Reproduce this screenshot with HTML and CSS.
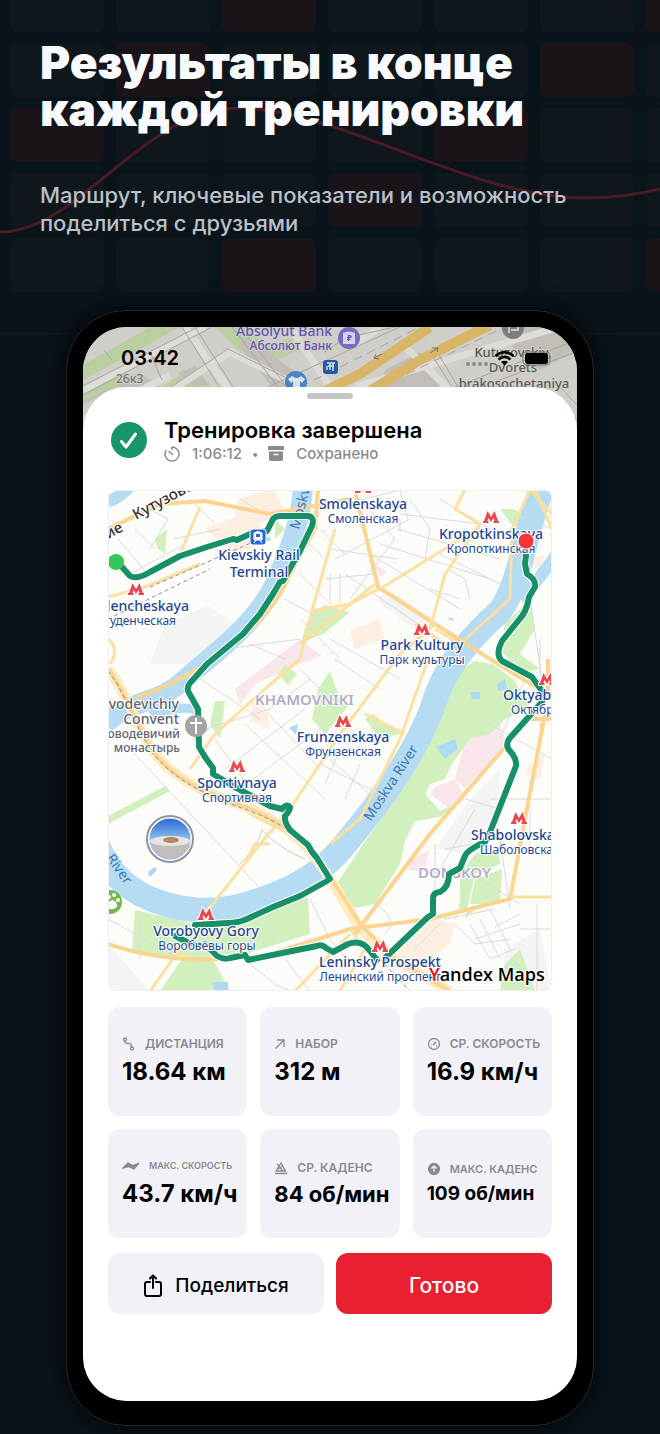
FILE: index.html
```html
<!DOCTYPE html>
<html lang="ru">
<head>
  <meta charset="UTF-8" />
  <meta name="viewport" content="width=device-width, initial-scale=1" />
  <title>Результаты тренировки</title>
  <link rel="stylesheet" href="styles.css">
</head>
<body>
  <svg class="backdrop" viewBox="0 0 660 340" preserveAspectRatio="xMidYMin slice" aria-hidden="true">
    <defs>
      <pattern id="tiles" x="10" y="-22" width="106" height="65" patternUnits="userSpaceOnUse">
        <rect width="94" height="54" rx="8" fill="#0f171c" />
      </pattern>
    </defs>
    <rect y="-22" width="660" height="315" fill="url(#tiles)" />
    <g fill="#1a141a">
      <rect x="222" y="-22" width="94" height="54" rx="8" />
      <rect x="646" y="-22" width="94" height="54" rx="8" />
      <rect x="116" y="43" width="94" height="54" rx="8" />
      <rect x="540" y="43" width="94" height="54" rx="8" />
      <rect x="10" y="108" width="94" height="54" rx="8" />
      <rect x="434" y="108" width="94" height="54" rx="8" />
      <rect x="328" y="173" width="94" height="54" rx="8" />
      <rect x="222" y="238" width="94" height="54" rx="8" />
      <rect x="646" y="238" width="94" height="54" rx="8" />
    </g>
    <path d="M0 232C80 232 140 109 240 108C340 109 470 198 585 198C615 198 640 194 660 189" fill="none" stroke="#4a1a25" stroke-width="3" />
    <path d="M0 334H660" stroke="#111c24" />
  </svg>

  <header class="hero">
    <h1>Результаты в конце каждой тренировки</h1>
    <p>Маршрут, ключевые показатели и возможность поделиться с друзьями</p>
  </header>

  <main class="phone">
    <div class="screen">
      <svg class="top-map" viewBox="83 327 494 110" preserveAspectRatio="xMidYMin slice" aria-hidden="true">
        <rect x="83" y="327" width="494" height="110" fill="#cfcec9" />
        <g fill="#b9cf9f">
          <path d="M83 365L150 327H180L83 380ZM83 395L120 372L128 380L83 405ZM215 327L250 327L262 345L240 352ZM160 388L195 365L212 388ZM262 348L290 338L300 350L272 362Z" />
        </g>
        <g fill="#c2bdb7">
          <path d="M245 337L265 350L300 375L290 387H272L238 345ZM83 405L140 372L160 387H110L83 402ZM178 373L195 366L208 385L195 387ZM385 370L420 352L440 387H380ZM505 327H577V350L540 370L515 352Z" />
        </g>
        <g fill="none" stroke="#dddcd8" stroke-width="7">
          <path d="M83 390L205 327M100 437L230 352L300 387M185 327L262 437M290 327L330 387M380 327L355 345M355 387L560 327M400 342L460 400M83 420L170 375" />
        </g>
        <g fill="none" stroke="#a5a5a2" stroke-width="1">
          <path d="M83 386L198 327M83 395L212 327M96 437L228 349L305 387M182 327L250 437M195 327L265 437M232 327L278 387M240 327L287 387M268 387L400 327M325 352L345 338L395 327M455 387L577 340M480 387L577 352M430 352L452 387M436 350L458 387M545 387L577 420M560 387L577 405M83 343L110 327M104 350L112 360M150 352L162 380" />
          <path d="M300 387L420 327M380 387L505 327" stroke-dasharray="9 6" />
        </g>
        <path d="M315 396L360 374L430 327M365 394L420 360L490 325" fill="none" stroke="#d9b566" stroke-width="10" />
        <path d="M382 354L374 358M374 358L376 354M374 358L379 359M430 353L438 348M438 348L432 348M438 348L437 352" fill="none" stroke="#77756c" />
        <circle cx="349" cy="338" r="11" fill="#7a68c2" />
        <path d="M343 333Q349 330 355 333V344H343Z" fill="#d7d2e8" />
        <text class="rub" x="347" y="341">₽</text>
        <rect x="323" y="360" width="15" height="14" rx="3" fill="#2459a8" />
        <path d="M327 363H335M328 366H334M327 370V366M330 370V363M333 363V371" fill="none" stroke="#d5dce8" stroke-width="1.5" />
        <circle cx="296" cy="382" r="11" fill="#4685c6" />
        <path d="M292 376L288 379L291 383L293 381V388H300V381L302 383L305 379L301 376Q297 380 292 376Z" fill="#dce2e6" />
        <circle cx="513" cy="328" r="11" fill="#7f7d7b" />
        <path d="M509 333V325H518V330H511" fill="none" stroke="#c9c8c6" stroke-width="2" />
        <g class="top-labels">
          <g fill="#6553ad" text-anchor="end">
            <text x="332" y="336" font-size="14">Absolyut Bank</text>
            <text x="332" y="350" font-size="12">Абсолют Банк</text>
          </g>
          <g fill="#5a5957" text-anchor="middle" font-size="13">
            <text x="513" y="357">Kutuzovskiy,</text>
            <text x="513" y="372">Dvorets</text>
            <text x="514" y="388">brakosochetaniya</text>
          </g>
          <text x="116" y="383" font-size="12" fill="#777672">26к3</text>
        </g>
      </svg>

      <div class="status-bar">
        <span class="clock">03:42</span>
        <svg class="status-icons" width="88" height="20" viewBox="463 348 88 20" aria-hidden="true">
          <g fill="#8d8c88"><circle cx="468" cy="364" r="2" /><circle cx="474" cy="364" r="2" /><circle cx="480" cy="364" r="2" /><circle cx="486" cy="364" r="2" /></g>
          <g fill="none" stroke="#000" stroke-width="2.5">
            <path d="M495.500 356Q504.500 348.500 513.500 356M498.500 359.500Q504.500 354.500 510.500 359.500" />
          </g>
          <path d="M501 362Q504.500 359.500 508 362L504.500 365.500Z" />
          <rect x="523" y="352" width="27" height="13" rx="4" fill="none" stroke="#777" />
          <rect x="525" y="353" width="23" height="11" rx="3" />
        </svg>
      </div>

      <section class="sheet">
        <div class="handle"></div>
        <div class="summary">
          <svg class="done" width="38" height="38" viewBox="0 0 38 38" aria-hidden="true">
            <circle cx="19" cy="19" r="18" fill="#17966c" />
            <path d="M11.500 20.500L16 26L25.500 13" fill="none" stroke="#fff" stroke-width="3" stroke-linecap="round" stroke-linejoin="round" />
          </svg>
          <div>
            <h2>Тренировка завершена</h2>
            <p class="meta">
              <svg width="16" height="16" viewBox="0 0 16 16" fill="none" stroke="currentColor" stroke-width="1.500" stroke-linecap="round" aria-hidden="true">
                <path d="M8 1A7 7 0 1 1 2 4.500M8 1V3.500M5 5.500L8.500 8.500" />
              </svg>
              <span class="time">1:06:12</span>
              <span class="dot">•</span>
              <svg width="16" height="16" viewBox="0 0 16 16" fill="currentColor" aria-hidden="true">
                <rect width="16" height="4" rx="1" />
                <path d="M1 5.500H15V13Q15 15 13 15H3Q1 15 1 13Z" />
                <path d="M5.500 8.500H10.500" stroke="#fff" stroke-width="1.500" />
              </svg>
              <span class="saved">Сохранено</span>
            </p>
          </div>
        </div>

        <svg class="route-map" viewBox="108 491 444 501" role="img" aria-label="Маршрут тренировки">
          <defs>
            <g id="metro">
              <path d="M-8 6V4H-7L-3.500-6L0 0L3.500-6L7 4H8V6H2.500V4H3.500L2.500 1L0 5L-2.500 1L-3.500 4H-2.500V6Z" fill="#e94850" stroke="#fff" stroke-width="2" paint-order="stroke" />
            </g>
            <path id="track" d="M122 568L130 577Q137 581 150 573L180 557L207 548L233 540L237 541L250 535L267 532L272 522Q274 517 280 517H308Q315 518 312 527L300 552L288 573L283 582L280 583L273 595L260 615L243 635L207 665L190 684Q186 689 189 694L198 710L199 748L205 758L213 769V775L233 787L270 807L282 810Q287 804 290 808Q290 812 285 817Q284 823 290 831L308 846L312 853L317 859L330 880M327 882L300 897L273 908L247 920Q238 924 228 924L195 926M175 937L187 943L210 950L217 957Q224 961 230 959L245 956L248 961L287 953L317 947Q322 945 326 949L333 953L348 945Q362 940 370 952L377 961M385 959L428 918L433 915V900Q433 893 440 893Q449 888 449 875L460 869L465 857Q467 851 485 843L490 833L516 767Q517 760 510 752Q505 747 509 740L542 703V692L532 678L502 662Q495 656 502 642L518 622Q527 613 529 598L535 588Q536 580 527 575L525 565L527 548" />
            <linearGradient id="sky" x2="0" y2="1">
              <stop stop-color="#2465d2" />
              <stop offset="0.500" stop-color="#8dbbea" />
            </linearGradient>
          </defs>
          <rect x="108" y="491" width="444" height="501" fill="#fcfcf9" />

          <!-- districts -->
          <g fill="#f4f4f4">
            <path d="M165 625L208 607L235 625L190 665L150 665ZM470 800L500 770L495 830L465 855L435 850ZM390 591L435 620L420 635L375 600ZM108 945L150 992H108ZM505 950L540 930L552 992H500Z" />
          </g>
          <g fill="#fdeee2">
            <path d="M238 500L272 490L285 510L260 525L262 545L235 555L205 530L235 518ZM350 632L378 620L385 640L355 650ZM253 703L268 715L270 730L250 722ZM528 767L545 755L540 780L525 775ZM395 945L425 920L455 925L450 945L425 965L400 958ZM530 560L545 555L540 575Z" />
          </g>
          <g fill="#fae7ec">
            <path d="M235 690L300 640L322 657L300 665L255 685L240 705ZM465 740L500 725L507 745L465 790L455 780ZM435 788L455 780L465 800L450 810L430 795ZM372 562L387 573L380 578ZM413 860L430 850L425 870L405 870Z" />
          </g>
          <!-- parks -->
          <g fill="#d2f0bd">
            <path d="M455 674L475 662L492 665L500 670L515 682L530 710L505 720L490 735L470 740L452 765L445 780L430 785L425 795L440 812L465 800L440 818L415 822L405 842L400 865L375 905L355 909L333 890L370 835L415 770L440 720Z" />
            <path d="M135 911L195 925L250 920L308 898L310 935L245 955L210 955L230 992H160L182 960L132 953Z" />
            <path d="M500 650L505 625L530 600L535 630L520 655L540 670L520 674ZM325 606L350 613L325 634L300 645L310 615ZM318 690L330 672L340 700L350 705L325 735L312 720ZM155 540L167 530L165 555L158 550ZM215 702H225L220 740L210 725ZM108 825V817L165 787L170 792ZM475 880L502 870L500 905L470 905ZM460 875L475 855L498 847L500 865L475 875L465 920L475 910H460ZM505 965L520 950L535 992H500ZM512 510L525 515L515 530L500 510ZM184 720L210 730L195 742ZM278 675L285 665L297 675L288 686ZM373 715L400 735L380 740L365 720ZM275 520L285 530L275 540Z" />
          </g>
          <!-- water -->
          <g fill="none" stroke="#b5dcf2" stroke-linejoin="round">
            <path d="M303 485C302 525 285 560 275 585C255 625 220 650 185 680C160 705 130 700 105 725" stroke-width="20" />
            <path d="M150 716Q185 705 198 712" stroke-width="9" />
            <path d="M95 840C108 875 130 895 165 905C205 917 240 912 290 889C330 870 345 845 370 814C400 775 425 735 437 695C450 660 475 635 500 612C520 585 523 540 543 485" stroke-width="25" />
            <path d="M520 600Q540 580 558 553" stroke-width="12" />
            <path d="M108 503Q122 497 130 487" stroke-width="12" />
          </g>
          <g fill="#aed9f4">
            <path d="M436 748L455 740L458 750L445 760ZM470 693H480V700H472ZM497 685L505 680L507 690L498 692ZM148 873L155 868L157 871L150 878ZM212 983H228V992H215ZM289 729L298 725L296 736ZM447 619H453V622ZM262 538H270V542H262Z" />
          </g>
          <!-- side streets -->
          <g class="streets">
            <path d="M118 540L150 578M108 532L170 500M130 575L185 545M150 550L168 520L145 508M173 540L220 530M190 500L215 525M135 530L155 550M240 500L265 515" />
            <path d="M325 510L400 491M330 550L398 560M335 560L410 520M345 575L440 640M370 555L460 610M380 545L490 580M397 530L500 560M360 500L395 540L350 600M410 500L430 530L425 560M400 515L480 525M440 500L490 530M440 555L500 585M325 580L375 575M330 575V606M340 575V606M430 590L460 600M320 530L345 555M448 570L465 580L470 600M400 491L408 520M360 520H400V532" />
            <path d="M130 750L270 900M225 650L300 640M250 645L285 660M200 680L260 720M205 730L270 710L310 680M225 770L305 710M240 790L320 730M215 740L250 790M255 700L320 770M245 725L325 800M300 620L340 660M300 670L330 700M330 640L400 680M335 660L380 690M285 600L330 625M300 575L325 600M310 545L325 560M320 765L390 800M330 760L375 800M340 750L325 785M360 765L345 800" />
            <path d="M480 720L552 760M525 680L500 740M490 800L552 800M475 810L440 870M465 800L500 810M445 850L500 840M530 780V850M435 845V900M410 870L480 880L520 905M500 840L510 910M455 920L460 905M375 905Q400 920 385 935M415 950L445 920L495 910M455 925L475 945L510 940M470 925L490 960L515 950M480 920L500 960M490 910L510 950M475 940L520 925M495 928L520 915M537 905V992M520 930H552M530 600L545 700M540 640V730M515 515L552 530M250 930V965L275 985L290 992M285 960L310 992M310 900L330 940L350 965M140 920V960M108 920L180 960" />
          </g>
          <path d="M240 865Q260 845 262 830M263 832Q280 850 305 860" fill="none" stroke="#ccc" />
          <!-- main roads -->
          <g class="road-edge">
            <path d="M108 670C125 690 135 725 155 755C180 785 210 795 250 810C300 830 320 860 360 930L395 960L450 992" />
          </g>
          <g class="roads">
            <path class="wide" d="M108 670C125 690 135 725 155 755C180 785 210 795 250 810C300 830 320 860 360 925L395 960L450 992" />
            <path class="wide" d="M355 491L378 588L435 625L490 660L552 698" />
            <path class="wide" d="M108 530L160 505L205 502L270 515L350 500M318 491L315 530L290 575C270 625 220 660 170 685L135 700" />
            <path d="M108 598L145 588L200 565M200 508L180 555M335 530L312 612M312 612L350 605L378 590M430 630L445 575L480 525L455 510L465 491M380 590L480 528M312 612L300 660L265 690L215 735L190 770M300 645L375 585M435 625L400 655L340 735L290 810L260 845L205 915L150 992M428 660L400 740L360 820L330 845M365 715L405 735M435 630L460 645L510 600L512 530L530 491M415 625L460 655" />
            <path class="wide" d="M505 748L430 835L370 915L355 935" />
            <path class="wide" d="M108 945Q180 970 270 955L350 930L430 920L510 900L525 820L545 715" />
            <path d="M510 898H552M350 930L365 950L340 992M245 865L255 845H270M108 640Q120 650 110 665M290 835L250 815M295 992L350 935M180 958L205 920M535 491L552 530M530 491L552 515" />
            <path class="wide" d="M552 720H525M548 660V700" />
          </g>
          <path d="M108 672C125 692 135 730 155 757C180 785 210 798 250 812C285 825 305 842 315 860M108 620L210 570M150 588L260 540M380 960L410 992" fill="none" stroke="#8b8e99" stroke-dasharray="4 3" />

          <g class="place gray-place">
            <text x="255" y="706">KHAMOVNIKI</text>
            <text x="418" y="879">DONSKOY</text>
          </g>
          <g class="river-name">
            <text transform="translate(371 823) rotate(-57)">Moskva River</text>
            <text transform="translate(299 531) rotate(-75)">Moskva</text>
            <text transform="translate(106 859) rotate(55)">River</text>
          </g>

          <use href="#track" class="route-edge" />
          <use href="#track" class="route" />
          <circle cx="116" cy="563" r="8" fill="#35c858" />
          <circle cx="196" cy="727" r="11" fill="#a2a3a5" />
          <path d="M196 719V735M190 724H202" stroke="#fff" stroke-width="2" />
          <rect x="250" y="530" width="16" height="16" rx="3" fill="#2867dc" stroke="#fff" />
          <path d="M254 534Q258 531 262 534V541H254ZM256 541L254 544M260 541L262 544" fill="#fff" stroke="#fff" />
          <path d="M256 535H260V538H256Z" fill="#2867dc" />
          <circle cx="170" cy="840" r="22" fill="url(#sky)" stroke="#fff" stroke-width="3" />
          <circle cx="170" cy="840" r="23" fill="none" stroke="#8f939d" stroke-width="2" />
          <path d="M151 842Q170 833 190 842V848Q170 872 151 848Z" fill="#c0bdba" />
          <ellipse cx="170" cy="842" rx="20" ry="5" fill="#e7e6e3" />
          <ellipse cx="171" cy="841" rx="8" ry="3" fill="#b2895f" />
          <g fill="#71b74b">
            <circle cx="110" cy="903" r="12" />
            <path d="M108 909Q108 901 113 901Q118 904 117 908Q112 912 108 909Z" fill="#fff" />
            <g fill="#fff"><circle cx="109" cy="898" r="2" /><circle cx="114" cy="896" r="2" /><circle cx="118" cy="901" r="2" /></g>
          </g>

          <use href="#metro" x="136" y="590" />
          <use href="#metro" x="491" y="518" />
          <use href="#metro" x="363" y="488" />
          <use href="#metro" x="422" y="630" />
          <use href="#metro" x="343" y="722" />
          <use href="#metro" x="237" y="767" />
          <use href="#metro" x="547" y="680" />
          <use href="#metro" x="519" y="819" />
          <use href="#metro" x="206" y="915" />
          <use href="#metro" x="380" y="947" />

          <g class="place">
            <g class="en">
              <text x="363" y="510">Smolenskaya</text>
              <text x="491" y="540">Kropotkinskaya</text>
              <text x="422" y="651">Park Kultury</text>
              <text x="343" y="743">Frunzenskaya</text>
              <text x="237" y="789">Sportivnaya</text>
              <text x="206" y="937">Vorobyovy Gory</text>
              <text x="380" y="968">Leninsky Prospekt</text>
              <text class="left" x="471" y="841">Shabolovskaya</text>
              <text class="left" x="503" y="701">Oktyabrskaya</text>
              <text class="right" x="189" y="612">Studencheskaya</text>
            </g>
            <g class="station">
              <text x="259" y="561">Kievskiy Rail</text>
              <text x="259" y="578">Terminal</text>
            </g>
            <g class="ru">
              <text x="363" y="524">Смоленская</text>
              <text x="491" y="554">Кропоткинская</text>
              <text x="422" y="665">Парк культуры</text>
              <text x="343" y="757">Фрунзенская</text>
              <text x="237" y="803">Спортивная</text>
              <text x="207" y="951">Воробьёвы горы</text>
              <text x="380" y="982">Ленинский проспект</text>
              <text class="left" x="480" y="855">Шаболовская</text>
              <text class="left" x="511" y="715">Октябрьская</text>
              <text class="right" x="176" y="626">Студенческая</text>
            </g>
            <g class="convent">
              <text x="179" y="710">Novodevichiy</text>
              <text x="179" y="725">Convent</text>
              <text class="small" x="180" y="739">Новодевичий</text>
              <text class="small" x="180" y="753">монастырь</text>
            </g>
            <g class="avenue">
              <text transform="translate(136 521) rotate(-28)">Кутузовский</text>
              <text transform="translate(108 540) rotate(-28)">ие</text>
            </g>
          </g>
          <circle cx="526" cy="542" r="8" fill="#fa3535" stroke="#fff" />
          <text class="map-logo" x="429" y="982"><tspan fill="#f00">Y</tspan>andex Maps</text>
          <rect x="108.500" y="491.500" width="443" height="500" rx="7" fill="none" stroke="#eee" />
        </svg>

        <div class="stats">
          <div class="stat">
            <p class="label">
              <svg width="14" height="14" viewBox="0 0 14 14" aria-hidden="true"><circle cx="3" cy="2.500" r="1.500" /><circle cx="10" cy="11.500" r="1.500" /><path d="M3 4Q2 6 5 6.500Q10 6 9.500 10" /></svg>
              Дистанция
            </p>
            <p class="value">18.64 км</p>
          </div>
          <div class="stat">
            <p class="label">
              <svg width="12" height="14" viewBox="0 0 12 14" aria-hidden="true"><path d="M1.500 11.500L10 3M3 3H10V10" /></svg>
              Набор
            </p>
            <p class="value">312 м</p>
          </div>
          <div class="stat">
            <p class="label">
              <svg width="14" height="14" viewBox="0 0 14 14" aria-hidden="true"><circle cx="7" cy="7" r="5.500" /><path d="M6 8L9 5M4 7H4.500M7 4V4.300M9.500 8H10M4.500 10H5M9 10H9.500" /></svg>
              Ср. скорость
            </p>
            <p class="value">16.9 км/ч</p>
          </div>
          <div class="stat">
            <p class="label label-small">
              <svg width="18" height="14" viewBox="0 0 18 14" aria-hidden="true"><path d="M1 9L6 4L11 6.500L17 4L12 10L6.500 7.500Z" fill="currentColor" /></svg>
              Макс. скорость
            </p>
            <p class="value">43.7 км/ч</p>
          </div>
          <div class="stat">
            <p class="label">
              <svg width="14" height="14" viewBox="0 0 14 14" aria-hidden="true"><path d="M2 10L7 2L11.500 10ZM1 12.500H13M3 3L9 10M4 8L9 5" /></svg>
              Ср. каденс
            </p>
            <p class="value value-medium">84 об/мин</p>
          </div>
          <div class="stat">
            <p class="label label-medium">
              <svg width="14" height="14" viewBox="0 0 14 14" aria-hidden="true"><circle cx="7" cy="7" r="5.500" fill="currentColor" /><path d="M7 10V4.500M4.500 6.500L7 4L9.500 6.500" stroke="#f2f1f7" /></svg>
              Макс. каденс
            </p>
            <p class="value value-small">109 об/мин</p>
          </div>
        </div>

        <div class="actions">
          <button type="button" class="share">
            <svg width="20" height="24" viewBox="0 0 20 24" fill="none" stroke="currentColor" stroke-width="2" stroke-linecap="round" stroke-linejoin="round" aria-hidden="true">
              <path d="M7 8H4Q2 8 2 10V20Q2 22 4 22H16Q18 22 18 20V10Q18 8 16 8H13M10 14V2M7 4.500L10 1.500L13 4.500" />
            </svg>
            Поделиться
          </button>
          <button type="button" class="ready">Готово</button>
        </div>
      </section>
    </div>
  </main>
</body>
</html>
```

FILE: styles.css
```css
* {
  box-sizing: border-box;
}
body {
  margin: 0;
  position: relative;
  background: #09131a;
  font-family: Inter, "Noto Sans", sans-serif;
}
h1, h2, p {
  margin: 0;
}
.backdrop {
  position: absolute;
  top: 0;
  left: 0;
  width: 100%;
  height: 340px;
}
.hero {
  position: relative;
  padding: 39px 40px 0;
  color: #f8fafc;
}
.hero h1 {
  max-width: 560px;
  font-size: 46px;
  font-weight: 900;
  line-height: 47px;
}
.hero p {
  margin-top: 48px;
  max-width: 560px;
  color: #b9c0ca;
  font-size: 22px;
  font-weight: 500;
  line-height: 28px;
}
.phone {
  position: relative;
  margin: 73px 66px 8px;
  padding: 16px 16px 24px;
  background: #000;
  border: 1px solid #262626;
  border-radius: 60px;
  box-shadow: 0 0 24px #000b;
}
.screen {
  position: relative;
  overflow: hidden;
  background: #cfcec9;
  border-radius: 44px;
}
.top-map {
  position: absolute;
  top: 0;
  left: 0;
  width: 100%;
  height: 110px;
}
.top-labels {
  font-family: "Noto Sans", sans-serif;
  font-weight: 500;
  stroke: #cfcec9;
  stroke-width: 2px;
  paint-order: stroke;
}
.rub {
  font-family: "Noto Sans", sans-serif;
  font-size: 8px;
  font-weight: 700;
  fill: #6553ad;
}
.status-bar {
  position: relative;
  display: flex;
  justify-content: space-between;
  align-items: center;
  height: 60px;
  padding: 2px 26px 0 38px;
}
.clock {
  font-size: 20px;
  font-weight: 600;
}
.sheet {
  position: relative;
  padding: 6px 25px 87px;
  background: #fff;
  border-radius: 44px;
}
.handle {
  width: 46px;
  height: 6px;
  margin: 0 auto;
  background: #c6c6c9;
  border-radius: 3px;
}
.summary {
  display: flex;
  align-items: center;
  gap: 16px;
  margin: 17px 2px 26px;
}
.summary h2 {
  font-size: 22px;
  font-weight: 600;
  line-height: 28px;
}
.meta {
  display: flex;
  align-items: center;
  color: #8a8a8e;
  font-size: 15px;
  font-weight: 500;
  line-height: 20px;
}
.time {
  margin-left: 12px;
}
.dot {
  margin: 0 10px;
  font-size: 12px;
}
.saved {
  margin-left: 12px;
}
.route-map {
  display: block;
  width: 100%;
  border-radius: 8px;
}
.streets {
  fill: none;
  stroke: #dadada;
  stroke-width: 1px;
}
.roads {
  fill: none;
  stroke: #fbe0a2;
  stroke-width: 3px;
  stroke-linejoin: round;
}
.roads .wide {
  stroke: #fbd590;
  stroke-width: 4px;
}
.road-edge {
  fill: none;
  stroke: #fdebc2;
  stroke-width: 10px;
}
.route, .route-edge {
  fill: none;
  stroke: #17906a;
  stroke-width: 6px;
  stroke-linejoin: round;
  stroke-linecap: round;
}
.route-edge {
  stroke: #fff;
  stroke-width: 8px;
}
.place {
  font-family: "Noto Sans", sans-serif;
  font-weight: 500;
  text-anchor: middle;
  fill: #23468f;
  stroke: #fff;
  stroke-width: 2px;
  stroke-linejoin: round;
  paint-order: stroke;
}
.en, .station {
  font-size: 14px;
}
.ru {
  font-size: 12px;
  font-weight: 400;
}
.left {
  text-anchor: start;
}
.right {
  text-anchor: end;
}
.convent {
  fill: #60646d;
  font-size: 14px;
  text-anchor: end;
}
.convent .small {
  font-size: 12px;
}
.avenue {
  fill: #333;
  font-size: 15px;
  text-anchor: start;
}
.gray-place {
  fill: #b1acc5;
  font-size: 15px;
  font-weight: 600;
  text-anchor: start;
}
.river-name {
  font-family: "Noto Sans", sans-serif;
  font-size: 14px;
  fill: #3e76b5;
}
.map-logo {
  font-family: "Open Sans", sans-serif;
  font-size: 18px;
  font-weight: 600;
  stroke: #fff;
  stroke-width: 2px;
  paint-order: stroke;
}
.stats {
  display: grid;
  grid-template-columns: repeat(3, 1fr);
  gap: 13px;
  margin-top: 16px;
}
.stat {
  display: flex;
  flex-direction: column;
  justify-content: center;
  height: 109px;
  padding: 1px 0 0 14px;
  background: #f2f1f7;
  border-radius: 12px;
  white-space: nowrap;
}
.label {
  display: flex;
  align-items: center;
  gap: 9px;
  color: #8a8a8e;
  font-size: 12px;
  font-weight: 600;
  line-height: 20px;
  text-transform: uppercase;
}
.label svg {
  fill: none;
  stroke: currentColor;
  stroke-width: 1.3px;
}
.label-medium {
  font-size: 11px;
}
.label-small {
  font-size: 9px;
}
.value {
  font-size: 24px;
  font-weight: 700;
  line-height: 36px;
}
.value-medium {
  font-size: 22px;
  line-height: 32px;
}
.value-small {
  font-size: 19px;
  line-height: 30px;
}
.actions {
  display: grid;
  grid-template-columns: 1fr 1fr;
  gap: 12px;
  margin-top: 15px;
}
button {
  display: flex;
  align-items: center;
  justify-content: center;
  gap: 12px;
  height: 61px;
  padding: 4px 6px 0;
  border: none;
  border-radius: 12px;
  font-family: inherit;
  cursor: pointer;
}
.share {
  background: #f2f1f7;
  color: #000;
  font-size: 19px;
  font-weight: 500;
}
.ready {
  background: #e82031;
  color: #fff;
  font-size: 21px;
  font-weight: 500;
}
```
